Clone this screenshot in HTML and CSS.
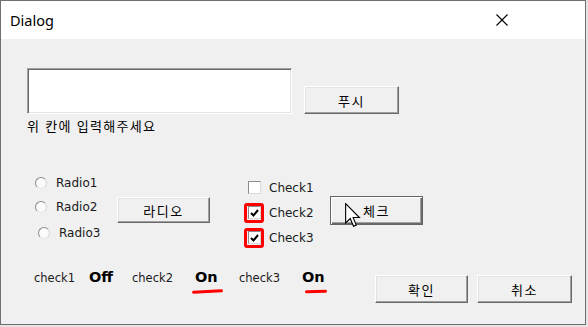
FILE: index.html
```html
<!DOCTYPE html>
<html lang="ko">
<head>
<meta charset="utf-8">
<title>Dialog</title>
<link rel="stylesheet" href="styles.css">
</head>
<body>
<div class="window">
  <div class="titlebar">
    <span class="title">Dialog</span>
    <svg class="close" width="12" height="12" viewBox="0 0 12 12"><path d="M0.5 0.5 L11.5 11.5 M11.5 0.5 L0.5 11.5" stroke="#000" stroke-width="1.1" fill="none"/></svg>
  </div>
  <div class="client">
    <div class="row1">
      <div class="edit"></div>
      <div class="btn btn-push">푸시</div>
    </div>
    <div class="hint">위 칸에 입력해주세요</div>

    <div class="row2">
      <div class="radios">
        <div class="radio-item"><span class="radio"></span><span class="lbl">Radio1</span></div>
        <div class="radio-item"><span class="radio"></span><span class="lbl">Radio2</span></div>
        <div class="radio-item r3"><span class="radio"></span><span class="lbl">Radio3</span></div>
      </div>
      <div class="btn btn-radio">라디오</div>
      <div class="checks">
        <div class="check-item"><span class="slot"><span class="box"></span></span><span class="lbl">Check1</span></div>
        <div class="check-item"><span class="slot marked"><span class="box checked"><svg width="9" height="8" viewBox="0 0 9 8"><path d="M1 4 L3.5 6.5 L8 1" stroke="#000" stroke-width="2" fill="none"/></svg></span></span><span class="lbl">Check2</span></div>
        <div class="check-item"><span class="slot marked"><span class="box checked"><svg width="9" height="8" viewBox="0 0 9 8"><path d="M1 4 L3.5 6.5 L8 1" stroke="#000" stroke-width="2" fill="none"/></svg></span></span><span class="lbl">Check3</span></div>
      </div>
      <div class="btn btn-check">체크</div>
    </div>

    <div class="row3">
      <div class="states">
        <span class="st s1">check1</span>
        <span class="val v1">Off</span>
        <span class="st s2">check2</span>
        <span class="val v2"><span class="mark m1">On</span></span>
        <span class="st s3">check3</span>
        <span class="val v3"><span class="mark m2">On</span></span>
      </div>
      <div class="btn btn-ok">확인</div>
      <div class="btn btn-cancel">취소</div>
    </div>
  </div>
  <svg class="cursor" width="16" height="25" viewBox="0 0 12.8 20"><path d="M0.5 0.5 L0.5 16 L4.2 12.4 L6.8 18.6 L9 17.7 L6.5 11.6 L11.5 11.6 Z" fill="#fff" stroke="#000" stroke-width="0.9" stroke-linejoin="miter"/></svg>
</div>
</body>
</html>
```

FILE: styles.css
```css
html, body {
  margin: 0;
  padding: 0;
  background: #e4e4e4;
}
body {
  width: 588px;
  height: 327px;
  overflow: hidden;
}
.window {
  position: relative;
  width: 584px;
  height: 323px;
  border: 1px solid #707070;
  background: #f0f0f0;
  font-family: "DejaVu Sans", sans-serif;
  font-size: 12px;
  color: #000;
}
.titlebar {
  height: 38px;
  background: #fff;
  display: flex;
  align-items: center;
  justify-content: space-between;
  padding: 0 77px 0 9px;
}
.title {
  font-family: "Noto Sans", sans-serif;
  font-size: 14.5px;
  color: #000;
  margin-top: -1px;
}
.close {
  display: block;
}
.client {
  padding: 29px 0 0 26px;
}
.row1 {
  display: flex;
  align-items: flex-end;
}
.edit {
  width: 263px;
  height: 44px;
  background: #fff;
  border: 1px solid;
  border-color: #a0a0a0 #fff #fff #a0a0a0;
  box-shadow: inset 1px 1px 0 #696969, inset -1px -1px 0 #e3e3e3;
}
.btn {
  box-sizing: border-box;
  width: 93px;
  display: flex;
  align-items: center;
  justify-content: center;
  background: #f0f0f0;
  border: 1px solid;
  border-color: #fff #696969 #696969 #fff;
  box-shadow: inset -1px -1px 0 #a0a0a0, inset 1px 1px 0 #e3e3e3;
  font-family: "Noto Sans CJK KR", sans-serif;
  font-size: 13px;
  letter-spacing: 1.5px;
  color: #000;
}
.btn-push {
  width: 95px;
  height: 28px;
  margin-left: 12px;
}
.hint {
  margin-top: 4px;
  font-family: "Noto Sans CJK KR", sans-serif;
  font-size: 13px;
  line-height: 16px;
  letter-spacing: 1.3px;
}
.row2 {
  margin-top: 37px;
  display: flex;
  align-items: flex-start;
}
.radios {
  margin-left: 8px;
  width: 82px;
}
.radio-item {
  height: 24px;
  display: flex;
  align-items: center;
}
.radio-item.r3 {
  margin-top: 2px;
  margin-left: 3px;
}
.radio {
  box-sizing: border-box;
  width: 12px;
  height: 12px;
  border-radius: 50%;
  border: 1.5px solid;
  border-color: #8a8a8a #d4d4d4 #e6e6e6 #8a8a8a;
  background: #fbfbfb;
  margin-right: 9px;
}
.lbl {
  font-family: "DejaVu Sans", sans-serif;
  font-size: 12px;
  line-height: 14px;
  color: #1a1a1a;
}
.btn-radio {
  margin-top: 26px;
  height: 26px;
}
.checks {
  margin-left: 34px;
  margin-top: 4px;
  width: 86px;
}
.check-item {
  height: 25px;
  display: flex;
  align-items: center;
}
.slot {
  box-sizing: border-box;
  width: 20px;
  height: 20px;
  display: flex;
  align-items: center;
  justify-content: center;
  margin-right: 5px;
  border-radius: 3px;
}
.slot.marked {
  border: 3px solid #ff0000;
}
.box {
  box-sizing: border-box;
  width: 13px;
  height: 13px;
  border: 1px solid;
  border-color: #8c8c8c #dadada #dadada #8c8c8c;
  background: #fff;
  display: flex;
  align-items: center;
  justify-content: center;
}
.box svg {
  display: block;
}
.btn-check {
  margin-top: 25px;
  height: 29px;
  align-items: flex-start;
  padding-top: 4px;
  border: 1px solid #646464;
  box-shadow: inset 1px 1px 0 #fff, inset -1px -1px 0 #696969, inset -2px -2px 0 #a0a0a0;
}
.row3 {
  margin-top: 19px;
  display: flex;
  align-items: flex-start;
}
.states {
  display: flex;
  align-items: baseline;
  margin-left: 7px;
  line-height: 16px;
}
.st {
  font-family: "DejaVu Sans", sans-serif;
  font-size: 11.5px;
  color: #1a1a1a;
}
.val {
  font-family: "DejaVu Sans", sans-serif;
  font-weight: bold;
  font-size: 14.5px;
  color: #000;
}
.s1 { width: 55px; }
.v1 { width: 43px; }
.s2 { width: 63px; }
.v2 { width: 44px; }
.s3 { width: 63px; }
.v3 { width: 73px; }
.mark {
  position: relative;
}
.mark::after {
  content: "";
  position: absolute;
  height: 3px;
  border-radius: 2px;
  background: #ff0000;
}
.m1::after {
  left: -3px;
  width: 31px;
  bottom: -8px;
  transform: rotate(-3deg);
}
.m2::after {
  left: 3px;
  width: 22px;
  bottom: -8px;
  transform: rotate(-2deg);
}
.btn-ok {
  margin-top: 6px;
  height: 28px;
}
.btn-cancel {
  margin-top: 6px;
  height: 28px;
  width: 95px;
  margin-left: 9px;
}
.cursor {
  position: absolute;
  left: 344px;
  top: 202px;
}
```
